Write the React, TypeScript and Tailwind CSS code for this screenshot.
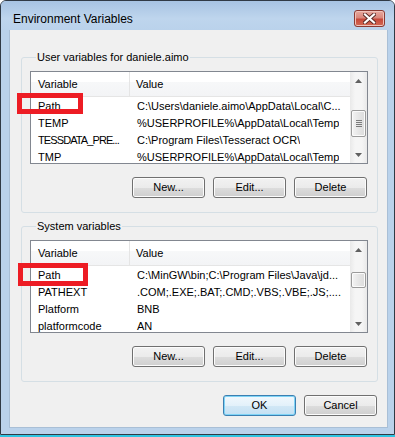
import React from 'react'

type Row = { name: string; value: string }

const userRows: Row[] = [
  { name: 'Path', value: 'C:\\Users\\daniele.aimo\\AppData\\Local\\C...' },
  { name: 'TEMP', value: '%USERPROFILE%\\AppData\\Local\\Temp' },
  { name: 'TESSDATA_PRE...', value: 'C:\\Program Files\\Tesseract OCR\\' },
  { name: 'TMP', value: '%USERPROFILE%\\AppData\\Local\\Temp' },
]

const systemRows: Row[] = [
  { name: 'Path', value: 'C:\\MinGW\\bin;C:\\Program Files\\Java\\jd...' },
  { name: 'PATHEXT', value: '.COM;.EXE;.BAT;.CMD;.VBS;.VBE;.JS;....' },
  { name: 'Platform', value: 'BNB' },
  { name: 'platformcode', value: 'AN' },
]

const WinButton = ({ children, isDefault }: { children: React.ReactNode; isDefault?: boolean }) => (
  <button
    className={`w-[73px] h-[21px] rounded-[3px] border text-[11px] leading-[19px] text-black ${
      isDefault
        ? 'border-[#3c7fb1] bg-[linear-gradient(#f1f8fd_0%,#e3f1fa_50%,#d2e8f6_50%,#c4e0f3_100%)] shadow-[inset_0_0_0_1px_#7fd4f6]'
        : 'border-[#707070] bg-[linear-gradient(#f2f2f2_0%,#ebebeb_50%,#dddddd_50%,#cfcfcf_100%)] shadow-[inset_0_0_0_1px_#fcfcfc]'
    }`}
  >
    {children}
  </button>
)

const Scrollbar = ({ thumbTop, thumbHeight }: { thumbTop: number; thumbHeight: number }) => (
  <div className="w-[17px] bg-[#f0f0f0] bg-[linear-gradient(90deg,#e9e9e9,#f5f5f5_30%,#f5f5f5_70%,#e9e9e9)] flex flex-col">
    <div className="h-[17px] flex items-center justify-center">
      <svg width="7" height="4" viewBox="0 0 7 4">
        <path d="M3.5 0 L7 4 L0 4 Z" fill="#606060" />
      </svg>
    </div>
    <div className="flex-1 flex flex-col">
      <div
        className="mx-[1px] rounded-[2px] border border-[#9b9b9b] bg-[linear-gradient(90deg,#f4f4f4,#e6e6e6_50%,#dcdcdc)] shadow-[inset_0_0_0_1px_#fbfbfb] flex flex-col items-center justify-center gap-[1px]"
        style={{ marginTop: thumbTop, height: thumbHeight }}
      >
        {thumbHeight > 20 && (
          <>
            <div className="w-[6px] h-[1px] bg-[#7c7c7c]" />
            <div className="w-[6px] h-[1px] bg-[#7c7c7c]" />
            <div className="w-[6px] h-[1px] bg-[#7c7c7c]" />
            <div className="w-[6px] h-[1px] bg-[#7c7c7c]" />
          </>
        )}
      </div>
    </div>
    <div className="h-[17px] flex items-center justify-center">
      <svg width="7" height="4" viewBox="0 0 7 4">
        <path d="M0 0 L7 0 L3.5 4 Z" fill="#606060" />
      </svg>
    </div>
  </div>
)

const VarList = ({ rows, thumbTop, thumbHeight }: { rows: Row[]; thumbTop: number; thumbHeight: number }) => (
  <div className="mt-[7px] h-[93px] border border-[#828790] bg-white flex">
    <div className="flex-1 flex flex-col overflow-hidden">
      <div className="h-[25px] shrink-0 flex items-stretch border-b border-[#e5e5e5] bg-[linear-gradient(#ffffff_0%,#ffffff_40%,#f7f8f9_40%,#f3f4f6_100%)]">
        <div className="w-[99px] shrink-0 pl-[7px] flex items-center border-r border-[#e5e5e5]">Variable</div>
        <div className="pl-[6px] flex items-center">Value</div>
      </div>
      {rows.map((row) => (
        <div key={row.name} className="h-[17px] shrink-0 flex leading-[18px] whitespace-nowrap">
          <div
            className={`w-[99px] shrink-0 pl-[7px] overflow-hidden ${
              row.name.length > 12 ? 'tracking-[-0.9px]' : ''
            }`}
          >
            {row.name}
          </div>
          <div className="pl-[7px] overflow-hidden">{row.value}</div>
        </div>
      ))}
    </div>
    <Scrollbar thumbTop={thumbTop} thumbHeight={thumbHeight} />
  </div>
)

const Group = ({ title, children }: { title: string; children: React.ReactNode }) => (
  <fieldset className="border border-[#d5dfe5] rounded-[3px] pl-[8px] pr-[9px] pb-[14px]">
    <legend className="ml-[6px] px-[1px] leading-[13px] text-black">{title}</legend>
    {children}
  </fieldset>
)

const ActionRow = () => (
  <div className="mt-[13px] flex justify-end gap-[8px] mr-[1px]">
    <WinButton>New...</WinButton>
    <WinButton>Edit...</WinButton>
    <WinButton>Delete</WinButton>
  </div>
)

export default function App() {
  return (
    <div className="relative w-[395px] h-[437px] bg-white flex flex-col font-['Liberation_Sans',Arial,sans-serif] text-[11px] text-black">
      <div className="h-[435px] rounded-t-[6px] border border-[#303a45] bg-[#bad2eb] flex flex-col pl-[8px] pr-[6px] pb-[6px]">
        {/* title bar */}
        <div className="h-[29px] shrink-0 -ml-[8px] -mr-[6px] pl-[12px] pr-[9px] rounded-t-[5px] bg-[linear-gradient(#a7c3e2,#bed5ed_60%,#bad2eb)] flex items-start justify-between">
          <span className="mt-[11px] text-[12px] leading-[14px]">Environment Variables</span>
          <div className="mt-[9px] w-[31px] h-[17px] rounded-[3px] border border-[#8a3a33] bg-[linear-gradient(#e8a99f_0%,#d9877c_45%,#c7493b_55%,#d26a55_100%)] shadow-[inset_0_0_0_1px_#f0c2ba] flex items-center justify-center">
            <svg width="13" height="11" viewBox="0 0 13 11">
              <path d="M2 1.5 L11 9.5 M11 1.5 L2 9.5" stroke="#5a2a26" strokeWidth="4" strokeLinecap="square" />
              <path d="M2 1.5 L11 9.5 M11 1.5 L2 9.5" stroke="#ffffff" strokeWidth="2.2" strokeLinecap="square" />
            </svg>
          </div>
        </div>

        {/* client area */}
        <div className="flex-1 bg-[#f0f0f0] border border-[#a9bfd6] border-t-0 pl-[11px] pr-[9px] flex flex-col">
          <div className="mt-[21px]">
            <Group title="User variables for daniele.aimo">
              <VarList rows={userRows} thumbTop={21} thumbHeight={27} />
              <ActionRow />
            </Group>
          </div>
          <div className="mt-[7px]">
            <Group title="System variables">
              <VarList rows={systemRows} thumbTop={14} thumbHeight={16} />
              <ActionRow />
            </Group>
          </div>
          <div className="mt-[13px] flex justify-end gap-[8px] mr-[1px]">
            <WinButton isDefault>OK</WinButton>
            <WinButton>Cancel</WinButton>
          </div>
        </div>
      </div>
      <div className="h-[2px] bg-[#2ec5e2]" />

      {/* red annotation boxes */}
      <div className="absolute left-[17px] top-[93px] w-[66px] h-[21px] border-[5px] border-[#ed1c24]" />
      <div className="absolute left-[18px] top-[263px] w-[70px] h-[23px] border-[5px] border-[#ed1c24]" />
    </div>
  )
}
